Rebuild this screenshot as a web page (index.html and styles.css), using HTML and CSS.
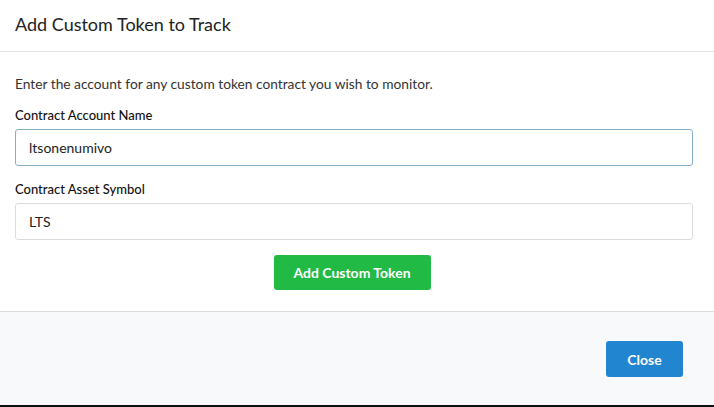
FILE: index.html
```html
<!DOCTYPE html>
<html>
<head>
<meta charset="utf-8">
<link rel="stylesheet" href="styles.css">
</head>
<body>
<div class="modal">
  <div class="modal-header">
    <h1 class="title">Add Custom Token to Track</h1>
  </div>
  <div class="modal-body">
    <p class="intro">Enter the account for any custom token contract you wish to monitor.</p>
    <label class="label">Contract Account Name</label>
    <div class="input focused">ltsonenumivo</div>
    <label class="label second">Contract Asset Symbol</label>
    <div class="input">LTS</div>
    <div class="actions">
      <button class="btn btn-green">Add Custom Token</button>
    </div>
  </div>
  <div class="modal-footer">
    <button class="btn btn-blue">Close</button>
  </div>
  <div class="bottom-bar"></div>
</div>
</body>
</html>
```

FILE: styles.css
```css
html, body {
  margin: 0;
  padding: 0;
  background: #fff;
}
body {
  font-family: Lato, "Open Sans", sans-serif;
  color: #333;
  width: 714px;
  height: 407px;
  overflow: hidden;
}
.modal {
  display: flex;
  flex-direction: column;
  height: 407px;
}
.modal-header {
  border-bottom: 1px solid #e2e2e2;
  display: flex;
  align-items: center;
  padding: 0 15px;
  box-sizing: border-box;
  height: 52px;
}
.title {
  margin: 0;
  font-size: 18px;
  font-weight: 400;
  color: #222;
  position: relative;
  top: -2px;
}
.modal-body {
  padding: 16px 21px 0 15px;
  height: 260px;
  box-sizing: border-box;
  border-bottom: 1px solid #dcdcdc;
}
.intro {
  margin: 0 0 6px;
  font-size: 13.75px;
  line-height: 32px;
  color: #333;
}
.label {
  display: block;
  font-size: 13px;
  font-weight: 500;
  color: #111;
  line-height: 18px;
  margin-bottom: 5px;
}
.label.second {
  margin-top: 14px;
}
.input {
  height: 37px;
  box-sizing: border-box;
  border: 1px solid #dcdcdc;
  border-radius: 3px;
  padding: 0 13px;
  display: flex;
  align-items: center;
  font-size: 14px;
  color: #222;
}
.input.focused {
  border-color: #86aec6;
}
.actions {
  display: flex;
  justify-content: center;
  margin-top: 15px;
  padding-right: 4px;
}
.btn {
  font-family: Lato, "Open Sans", sans-serif;
  font-weight: 700;
  font-size: 14px;
  color: #fff;
  border: none;
  border-radius: 3px;
  height: 35px;
  cursor: pointer;
}
.btn-green {
  background: #21ba45;
  width: 157px;
}
.modal-footer {
  flex: 1;
  background: #f8f9fa;
  display: flex;
  justify-content: flex-end;
  align-items: flex-start;
  padding: 29px 31px 0 0;
}
.btn-blue {
  background: #2185d0;
  width: 77px;
  height: 36px;
}
.bottom-bar {
  height: 2px;
  background: #111;
}
```
